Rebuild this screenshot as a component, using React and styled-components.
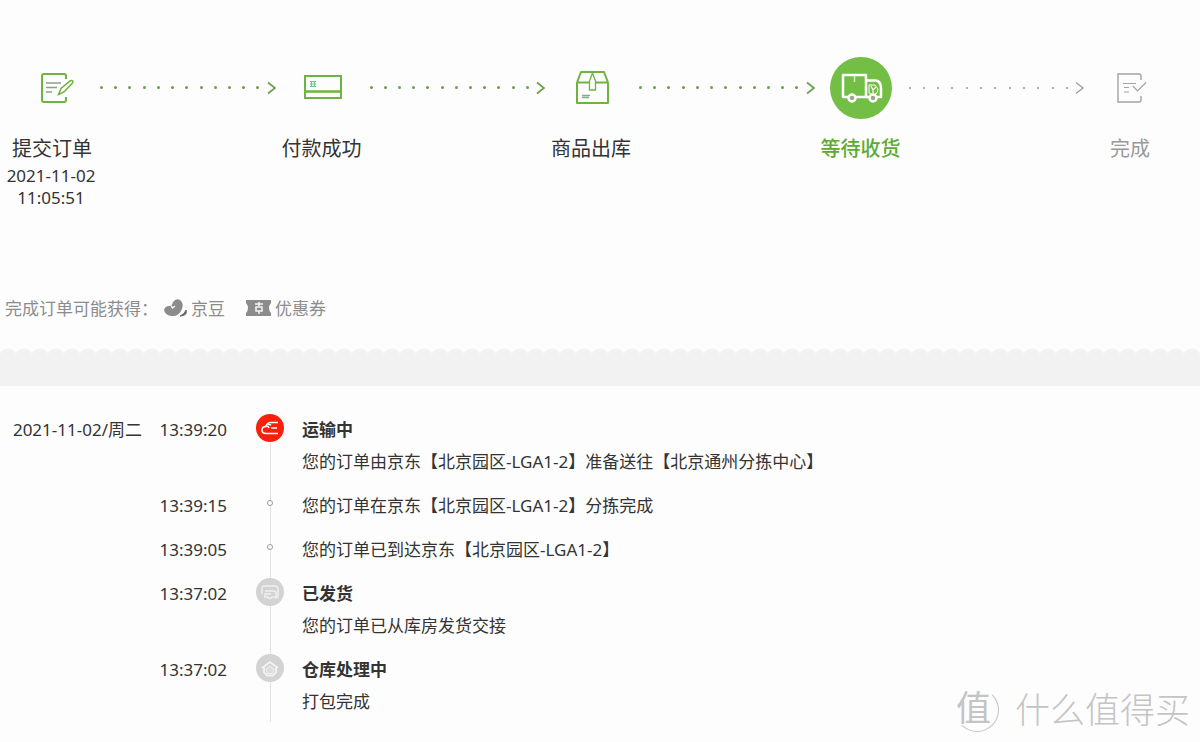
import React from "react";
import styled, { createGlobalStyle, css } from "styled-components";

const GlobalStyle = createGlobalStyle`
  * {
    box-sizing: border-box;
  }

  body {
    margin: 0;
    background-color: #fdfdfd;
    color: #333;
    font-family: "Noto Sans", "Noto Sans CJK SC", sans-serif;
    font-size: 17px;
  }
`;

function SubmitIcon() {
  return (
    <StepSvg width="44" height="40" viewBox="-5 -1 44 40" stroke="#6db33f" strokeWidth="2">
      <path d="M31 10V7a2 2 0 0 0-2-2H9a2 2 0 0 0-2 2v24a2 2 0 0 0 2 2h20a2 2 0 0 0 2-2v-3" />
      <path d="M11 14h15M11 18.500h11M11 23h6" stroke="#8d9f86" strokeWidth="1.300" />
      <path d="M23.500 25.500l2.500-6 9-7.500q4-1.500 2.500 2l-8.500 9z" strokeWidth="1.500" />
    </StepSvg>
  );
}

function CardIcon() {
  return (
    <StepSvg width="44" height="40" viewBox="-1 -2 44 40" stroke="#6db33f" strokeWidth="2">
      <rect x="4" y="6" width="36" height="22" />
      <path d="M4 21.500h36" strokeWidth="2.500" />
      <path d="M9 11.500h6M9 14h6M9 16.500h6M10.500 11v6M13.500 11v6" stroke="#67c389" strokeWidth="1" />
    </StepSvg>
  );
}

function BoxIcon() {
  return (
    <StepSvg width="44" height="40" viewBox="-2 0 44 40" stroke="#6db33f" strokeWidth="2">
      <path d="M6 14.500h31V35H6zM6 14.500l4-10.500h23l4 10.500" strokeLinejoin="round" />
      <path d="M21.500 5l-3 8v9h6v-9z" fill="#fdfdfd" strokeWidth="1.300" />
      <path d="M11 27.500h8M11 29.500h7" stroke="#7fae98" strokeWidth="1.400" />
    </StepSvg>
  );
}

function TruckIcon() {
  return (
    <StepSvg width="44" height="40" viewBox="-1 0 44 40" stroke="#fff" strokeWidth="2.500">
      <path d="M8 29H3V7h23v22H16" strokeLinejoin="round" />
      <path d="M26 12.500h9q6 0 6 8V29h-4M29 29h-3" strokeLinejoin="round" />
      <path d="M29 17h6l3 4-1 4-4 2-4-2z" strokeWidth="1" />
      <path d="M31 18l2 4 3-3M33 22v3" strokeWidth="1.200" />
      <path d="M14.500 8v6" stroke="#d8efc9" strokeWidth="1.500" />
      <circle cx="12" cy="30" r="3.500" fill="#9aa890" />
      <circle cx="33" cy="30" r="3.500" fill="#9aa890" />
    </StepSvg>
  );
}

function DoneIcon() {
  return (
    <StepSvg width="44" height="40" viewBox="-1 -1 44 40" stroke="#a3a3a3" strokeWidth="1.400">
      <path d="M32 11V7a2 2 0 0 0-2-2H9v28h21a2 2 0 0 0 2-2v-4" />
      <path d="M14 14.500h13M15 18.500h5M15 23h5" strokeWidth="1" />
      <path d="M24 17l4.500 5L37 13.500" strokeWidth="1.200" />
    </StepSvg>
  );
}

const STEPS = [
  { label: "提交订单", time: ["2021-11-02", "11:05:51"], icon: <SubmitIcon /> },
  { label: "付款成功", icon: <CardIcon /> },
  { label: "商品出库", icon: <BoxIcon /> },
  { label: "等待收货", icon: <TruckIcon />, state: "active" },
  { label: "完成", icon: <DoneIcon />, state: "todo" },
];

const RECORDS = [
  {
    date: "2021-11-02/周二",
    time: "13:39:20",
    title: "运输中",
    text: "您的订单由京东【北京园区-LGA1-2】准备送往【北京通州分拣中心】",
    kind: "transit",
  },
  { time: "13:39:15", text: "您的订单在京东【北京园区-LGA1-2】分拣完成" },
  { time: "13:39:05", text: "您的订单已到达京东【北京园区-LGA1-2】" },
  { time: "13:37:02", title: "已发货", text: "您的订单已从库房发货交接", kind: "shipped" },
  { time: "13:37:02", title: "仓库处理中", text: "打包完成", kind: "warehouse" },
];

function Connector({ muted }) {
  return (
    <ConnectorRow $muted={muted}>
      <Dots>
        {Array.from({ length: 12 }, (_, i) => (
          <Dot key={i} $muted={muted} />
        ))}
      </Dots>
      <svg width="10" height="14" viewBox="0 0 10 14" fill="none" stroke="currentColor" strokeWidth={muted ? 1.2 : 1.7}>
        <path d="M2 1.500L9 7l-7 5.500" />
      </svg>
    </ConnectorRow>
  );
}

function NodeIcon({ kind }) {
  if (kind === "transit") {
    return (
      <NodeBadge $active>
        <svg width="28" height="28" viewBox="0 0 28 28" fill="none" stroke="#fff" strokeWidth="1.600">
          <path d="M22 8.500h-7q-4 0-5 4-4 0-4 3.500t4 3.500h12M9 12q3-1 4 2M15 14h6M12 10l3 1" />
        </svg>
      </NodeBadge>
    );
  }
  if (kind === "shipped") {
    return (
      <NodeBadge>
        <svg width="28" height="28" viewBox="0 0 28 28" fill="none" stroke="#efefef" strokeWidth="1.500">
          <path d="M6 16V10q0-2 2-2h11q3 0 3 3v7q0 2-3 2" />
          <path d="M9 13h8q3 0 3 2v4h-4q-2 3-4 0H9v-3h6" />
        </svg>
      </NodeBadge>
    );
  }
  if (kind === "warehouse") {
    return (
      <NodeBadge>
        <svg width="28" height="28" viewBox="0 0 28 28" fill="none" stroke="#f3f3f3" strokeWidth="1.800">
          <path d="M6 14l8-6 8 6M8 13.500v5l3 3h6l3-3v-5" />
          <path d="M14 12l4 3-1.500 4.500h-5L10 15z" fill="#dcdcdc" strokeWidth="1" />
        </svg>
      </NodeBadge>
    );
  }
  return <NodeDot />;
}

function App() {
  return (
    <Page>
      <GlobalStyle />
      <Progress>
        {STEPS.map((step, i) => (
          <React.Fragment key={step.label}>
            {i > 0 && <Connector muted={step.state === "todo"} />}
            <Step>
              <StepIcon $active={step.state === "active"}>{step.icon}</StepIcon>
              <StepLabel $state={step.state}>{step.label}</StepLabel>
              {step.time && (
                <StepTime>
                  {step.time[0]}
                  <br />
                  {step.time[1]}
                </StepTime>
              )}
            </Step>
          </React.Fragment>
        ))}
      </Progress>

      <Rewards>
        <RewardsLabel>完成订单可能获得：</RewardsLabel>
        <Reward>
          <svg width="24" height="22" viewBox="0 -1 24 22" fill="#8c8c8c">
            <path d="M0 13q1-4 5-4 3 0 4-4 3-4 7-2 4 3 2 9-3 8-11 7-6-1-7-6z" />
            <path d="M16 19q5-2 6-6 2 5-5 6z" fill="#666" stroke="#666" />
            <path d="M7 8.500l1.500 2.500 2.500-2" fill="none" stroke="#fdfdfd" strokeWidth="1.400" />
          </svg>
          京豆
        </Reward>
        <Reward>
          <svg width="26" height="22" viewBox="0 -1 26 22">
            <path d="M0 3h25v3q-4 5 0 10v3H0v-3q4-5 0-10z" fill="#8c8c8c" />
            <path d="M9 7h8M10 10h6v4h-6zM13 5v4M13 14v3" fill="none" stroke="#f5f5f5" strokeWidth="1.500" />
          </svg>
          优惠券
        </Reward>
      </Rewards>

      <Divider />

      <Timeline>
        {RECORDS.map((record, i) => (
          <Record key={i}>
            <RecordDate>{record.date}</RecordDate>
            <RecordTime>{record.time}</RecordTime>
            <Rail>
              <NodeIcon kind={record.kind} />
            </Rail>
            <RecordBody>
              {record.title && <RecordTitle>{record.title}</RecordTitle>}
              <RecordText>{record.text}</RecordText>
            </RecordBody>
          </Record>
        ))}
      </Timeline>

      <Watermark>
        <WatermarkSeal>值</WatermarkSeal>
        什么值得买
      </Watermark>
    </Page>
  );
}

const Page = styled.main`
  position: relative;
  overflow: hidden;
`;

const Progress = styled.section`
  display: flex;
  align-items: flex-start;
  min-height: 288px;
  padding: 57px 24px 0 6px;
`;

const Step = styled.div`
  display: flex;
  flex-direction: column;
  align-items: center;
  flex: 0 0 92px;
`;

const StepIcon = styled.div`
  display: flex;
  align-items: center;
  justify-content: center;
  width: 62px;
  height: 62px;
  border-radius: 50%;
  background-color: ${(props) => (props.$active ? "#73be45" : "transparent")};
`;

const StepSvg = styled.svg`
  fill: none;
`;

const labelColors = {
  active: "#5cab30",
  todo: "#999",
};

const StepLabel = styled.div`
  margin-top: 15px;
  font-size: 20px;
  line-height: 30px;
  color: ${(props) => labelColors[props.$state] || "#333"};
  ${(props) =>
    props.$state === "active" &&
    css`
      font-weight: 500;
    `}
`;

const StepTime = styled.div`
  margin-top: 1px;
  padding-right: 2px;
  line-height: 22px;
  text-align: center;
`;

const ConnectorRow = styled.div`
  display: flex;
  flex: 1;
  align-items: center;
  gap: 6px;
  height: 61px;
  padding-left: 2px;
  color: ${(props) => (props.$muted ? "#999" : "#6a9f4c")};
`;

const Dots = styled.div`
  display: flex;
  flex: 1;
  justify-content: space-between;
`;

const Dot = styled.span`
  width: ${(props) => (props.$muted ? 2 : 3)}px;
  height: ${(props) => (props.$muted ? 2 : 3)}px;
  border-radius: 50%;
  background-color: currentColor;
`;

const Rewards = styled.section`
  display: flex;
  align-items: center;
  gap: 21px;
  height: 38px;
  padding-left: 5px;
  color: #8c8c8c;
`;

const RewardsLabel = styled.span`
  margin-right: -15px;
`;

const Reward = styled.span`
  display: flex;
  align-items: center;
  gap: 3px;
`;

const Divider = styled.div`
  height: 38px;
  margin-top: 22px;
  background:
    radial-gradient(circle at 8px 9px, #f2f2f3 8px, transparent 9px) 0 0 / 16px 6px repeat-x,
    linear-gradient(#f2f2f3, #f2f2f3) 0 6px / 100% 32px no-repeat;
`;

const Timeline = styled.ol`
  margin: 0;
  padding: 28px 24px 20px 0;
  list-style: none;
`;

const Record = styled.li`
  display: grid;
  grid-template-columns: 142px 85px 75px 1fr;
  line-height: 32px;
`;

const RecordDate = styled.span`
  text-align: right;
`;

const RecordTime = styled.time`
  text-align: right;
`;

const Rail = styled.div`
  display: flex;
  flex-direction: column;
  align-items: center;
  margin-left: 11px;
  background: linear-gradient(#e3e1e6, #e3e1e6) center / 1px 100% no-repeat;

  ${Record}:first-child & {
    background-position: center 16px;
  }
`;

const NodeBadge = styled.span`
  display: flex;
  width: 28px;
  height: 28px;
  border-radius: 50%;
  background-color: ${(props) => (props.$active ? "#f7200c" : "#d3d3d3")};
`;

const NodeDot = styled.span`
  width: 6px;
  height: 6px;
  margin-top: 10px;
  border: 1px solid #999;
  border-radius: 50%;
  background-color: #fdfdfd;
`;

const RecordBody = styled.div`
  padding-bottom: 12px;

  ${Record}:last-child & {
    padding-bottom: 4px;
  }
`;

const RecordTitle = styled.h3`
  margin: 0;
  font-size: 17px;
  font-weight: 700;
`;

const RecordText = styled.p`
  margin: 0;
`;

const Watermark = styled.div`
  position: absolute;
  right: 10px;
  bottom: 10px;
  display: flex;
  align-items: center;
  gap: 16px;
  font-size: 35px;
  font-weight: 300;
  line-height: 44px;
  color: #c4c4c4;
`;

const WatermarkSeal = styled.span`
  width: 44px;
  height: 44px;
  border: 1px solid transparent;
  border-right-color: #c4c4c4;
  border-bottom-color: #c4c4c4;
  border-radius: 50%;
  font-weight: 400;
  line-height: 38px;
`;

export default App;
